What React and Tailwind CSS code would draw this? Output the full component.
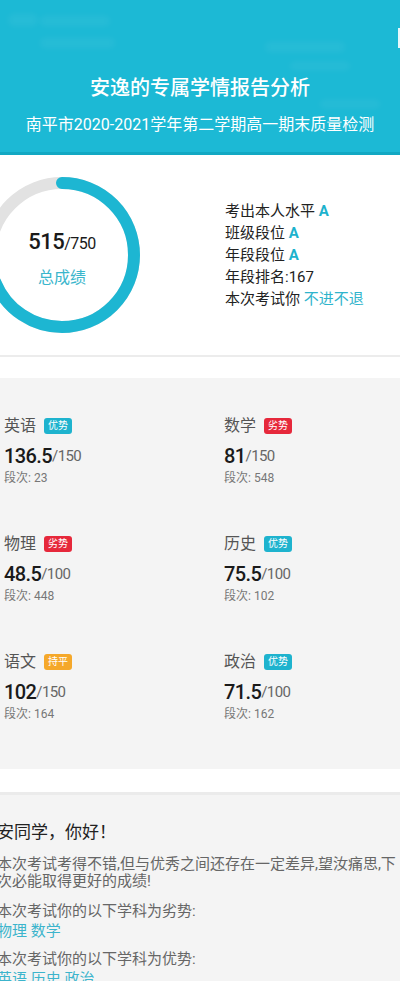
import React from 'react';

const subjects = [
  { name: '英语', tag: '优势', score: '136.5', full: '150', rank: '23' },
  { name: '数学', tag: '劣势', score: '81', full: '150', rank: '548' },
  { name: '物理', tag: '劣势', score: '48.5', full: '100', rank: '448' },
  { name: '历史', tag: '优势', score: '75.5', full: '100', rank: '102' },
  { name: '语文', tag: '持平', score: '102', full: '150', rank: '164' },
  { name: '政治', tag: '优势', score: '71.5', full: '100', rank: '162' },
];

const tagColor = {
  优势: 'bg-[#1eb3ce]',
  劣势: 'bg-[#e6283b]',
  持平: 'bg-[#f5a82a]',
};

const ScoreRing = () => {
  const r = 72;
  const c = 2 * Math.PI * r;
  const arc = (515 / 750) * c;
  return (
    <div className="relative w-[156px] h-[156px] -ml-[16px] shrink-0">
      <svg width="156" height="156" viewBox="0 0 156 156">
        <circle cx="78" cy="78" r={r} fill="none" stroke="#e2e2e2" strokeWidth="12" />
        <circle
          cx="78"
          cy="78"
          r={r}
          fill="none"
          stroke="#1db6d2"
          strokeWidth="12"
          strokeLinecap="round"
          strokeDasharray={`${arc} ${c}`}
          transform="rotate(-90 78 78)"
        />
      </svg>
      <div className="absolute inset-0 flex flex-col items-center justify-center pt-[8px]">
        <div className="leading-[26px] text-[#1a1a1a] tracking-[-0.5px]">
          <span className="text-[22px] font-medium">515</span>
          <span className="text-[16px]">/750</span>
        </div>
        <div className="mt-[10px] text-[16px] leading-[22px] text-[#3ab6cc]">总成绩</div>
      </div>
    </div>
  );
};

const App = () => {
  return (
    <div className="w-[400px] overflow-hidden bg-white font-['Roboto','Noto_Sans_CJK_SC',sans-serif]">
      {/* header */}
      <div className="relative h-[155px] bg-[#1cb9d5] overflow-hidden">
        <div className="absolute left-[8px] top-[14px] w-[30px] h-[12px] rounded-full bg-white/5 blur-[3px]" />
        <div className="absolute left-[40px] top-[16px] w-[70px] h-[10px] rounded-full bg-white/5 blur-[3px]" />
        <div className="absolute left-[40px] top-[38px] w-[75px] h-[10px] rounded-full bg-white/5 blur-[3px]" />
        <div className="absolute left-[265px] top-[42px] w-[80px] h-[10px] rounded-full bg-white/5 blur-[3px]" />
        <div className="absolute left-[290px] top-[62px] w-[60px] h-[8px] rounded-full bg-white/5 blur-[3px]" />
        <div className="absolute left-[320px] top-[100px] w-[60px] h-[8px] rounded-full bg-white/5 blur-[3px]" />
        <div className="absolute right-0 top-[28px] w-[2px] h-[20px] bg-white/90" />
        <div className="relative flex flex-col items-center pt-[74px] text-white">
          <div className="text-[20px] leading-[28px] font-medium">安逸的专属学情报告分析</div>
          <div className="mt-[11px] text-[16px] leading-[24px]">南平市2020-2021学年第二学期高一期末质量检测</div>
        </div>
        <div className="absolute left-0 right-0 bottom-0 h-[3px] bg-[#12a8c3]" />
      </div>

      {/* total */}
      <div className="flex items-center h-[202px] border-b-[2px] border-[#ececec] shadow-[0_1px_3px_rgba(0,0,0,0.06)]">
        <ScoreRing />
        <div className="ml-[85px] text-[15px] leading-[22px] text-[#222]">
          <div>考出本人水平 <span className="font-bold text-[#1db2cd]">A</span></div>
          <div>班级段位 <span className="font-bold text-[#1db2cd]">A</span></div>
          <div>年段段位 <span className="font-bold text-[#1db2cd]">A</span></div>
          <div>年段排名:167</div>
          <div>本次考试你 <span className="text-[#2fb4cc]">不进不退</span></div>
        </div>
      </div>

      <div className="h-[21px] bg-white" />

      {/* subjects */}
      <div className="bg-[#f4f4f4] pt-[38px] pb-[47px] pl-[4px]">
        <div className="grid grid-cols-[220px_1fr] gap-y-[48px]">
          {subjects.map((s) => (
            <div key={s.name} className="h-[70px]">
              <div className="flex items-center h-[20px]">
                <span className="text-[16px] text-[#555]">{s.name}</span>
                <span className={`ml-[8px] h-[16px] px-[4px] rounded-[3px] text-[10px] leading-[16px] text-white ${tagColor[s.tag]}`}>
                  {s.tag}
                </span>
              </div>
              <div className="mt-[7px] h-[26px] flex items-end leading-[26px] tracking-[-0.6px]">
                <span className="text-[20px] font-medium text-[#1a1a1a]">{s.score}</span>
                <span className="text-[15px] text-[#666]">/{s.full}</span>
              </div>
              <div className="mt-[1px] text-[12px] leading-[16px] text-[#777]">段次: {s.rank}</div>
            </div>
          ))}
        </div>
      </div>

      <div className="h-[23px] bg-white" />
      <div className="h-[3px] bg-[#ebebeb]" />

      {/* summary */}
      <div className="bg-[#f4f4f4] pt-[25px] pb-[20px] -ml-[3px]">
        <div className="text-[17px] leading-[24px] text-[#222]">安同学，你好！</div>
        <div className="mt-[12px] text-[15px] leading-[17px] text-[#666] whitespace-nowrap">
          本次考试考得不错,但与优秀之间还存在一定差异,望汝痛思,下
          <br />
          次必能取得更好的成绩!
        </div>
        <div className="mt-[11px] text-[15px] leading-[20px] text-[#666]">本次考试你的以下学科为劣势:</div>
        <div className="text-[15px] leading-[20px] text-[#3cb4cc]">物理 数学</div>
        <div className="mt-[8px] text-[15px] leading-[20px] text-[#666]">本次考试你的以下学科为优势:</div>
        <div className="text-[15px] leading-[20px] text-[#3cb4cc]">英语 历史 政治</div>
      </div>
    </div>
  );
};

export default App;
